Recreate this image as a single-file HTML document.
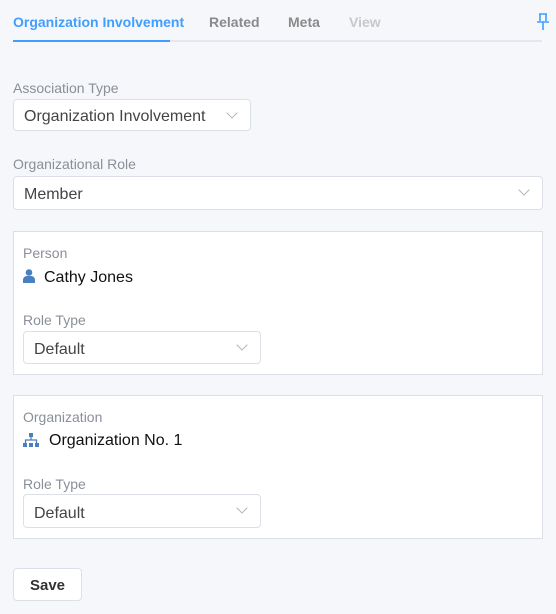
<!DOCTYPE html><html><head><style>
body{margin:0;width:556px;height:614px;background:#f5f7fa;font-family:"Liberation Sans",sans-serif;position:relative;overflow:hidden}
.a{position:absolute}
.lbl{font-size:14px;color:#8a8f98}
.sel{background:#fff;border:1px solid #dcdfe6;border-radius:4px;box-sizing:border-box;font-size:16px;color:#444}
.sel span{position:absolute;left:10px;top:8px}
.chev{position:absolute;right:14px;top:9px;width:7px;height:7px;border-right:1px solid #b0b4bb;border-bottom:1px solid #b0b4bb;transform:rotate(45deg)}
.box{background:#fff;border:1px solid #dcdfe6;box-sizing:border-box}
</style></head><body>
<div class="a" style="left:13px;top:14px;font-size:14px;font-weight:bold;color:#409eff">Organization Involvement</div>
<div class="a" style="left:209px;top:14px;font-size:14px;font-weight:bold;color:#8a8a8a">Related</div>
<div class="a" style="left:288px;top:14px;font-size:14px;font-weight:bold;color:#8a8a8a">Meta</div>
<div class="a" style="left:349px;top:14px;font-size:14px;font-weight:bold;color:#c8c8c8">View</div>
<div class="a" style="left:13px;top:40px;width:529px;height:2px;background:#e4e7ed"></div>
<div class="a" style="left:13px;top:40px;width:157px;height:2px;background:#409eff"></div>
<svg class="a" style="left:536px;top:13px" width="14" height="18" viewBox="0 0 14 18"><path d="M3 1h8M4 1v7M10 1v7M1 9h12M7 9v8" stroke="#409eff" stroke-width="1.6" fill="none"/></svg>
<div class="a lbl" style="left:13px;top:80px">Association Type</div>
<div class="a sel" style="left:13px;top:99px;width:238px;height:32px"><span>Organization Involvement</span><div class="chev"></div></div>
<div class="a lbl" style="left:13px;top:156px">Organizational Role</div>
<div class="a sel" style="left:13px;top:176px;width:530px;height:34px"><span style="top:9px">Member</span><div class="chev"></div></div>
<div class="a box" style="left:13px;top:231px;width:530px;height:144px"></div>
<div class="a lbl" style="left:23px;top:245px">Person</div>
<svg class="a" style="left:23px;top:269px" width="12" height="14" viewBox="0 0 12 14"><circle cx="6" cy="3.5" r="3.3" fill="#4a7fc1"/><path d="M0 14v-3a4 4 0 0 1 4-4h4a4 4 0 0 1 4 4v3z" fill="#4a7fc1"/></svg>
<div class="a" style="left:44px;top:269px;font-size:16px;color:#111">Cathy Jones</div>
<div class="a lbl" style="left:23px;top:312px">Role Type</div>
<div class="a sel" style="left:23px;top:331px;width:238px;height:33px"><span style="top:9px">Default</span><div class="chev"></div></div>
<div class="a box" style="left:13px;top:395px;width:530px;height:144px"></div>
<div class="a lbl" style="left:23px;top:409px">Organization</div>
<svg class="a" style="left:23px;top:433px" width="16" height="14" viewBox="0 0 16 14"><rect x="6" y="0" width="4" height="4" fill="#4a7fc1"/><path d="M8 4v3M2.5 10V7h11v3" stroke="#4a7fc1" stroke-width="1.3" fill="none"/><rect x="0" y="10" width="4" height="4" fill="#4a7fc1"/><rect x="6" y="10" width="4" height="4" fill="#4a7fc1"/><rect x="12" y="10" width="4" height="4" fill="#4a7fc1"/></svg>
<div class="a" style="left:49px;top:432px;font-size:16px;color:#111">Organization No. 1</div>
<div class="a lbl" style="left:23px;top:476px">Role Type</div>
<div class="a sel" style="left:23px;top:494px;width:238px;height:34px"><span style="top:10px">Default</span><div class="chev"></div></div>
<div class="a" style="left:13px;top:568px;width:69px;height:33px;background:#fff;border:1px solid #dcdfe6;border-radius:4px;box-sizing:border-box;font-size:15px;font-weight:bold;color:#333;text-align:center;line-height:33px">Save</div>
</body></html>
